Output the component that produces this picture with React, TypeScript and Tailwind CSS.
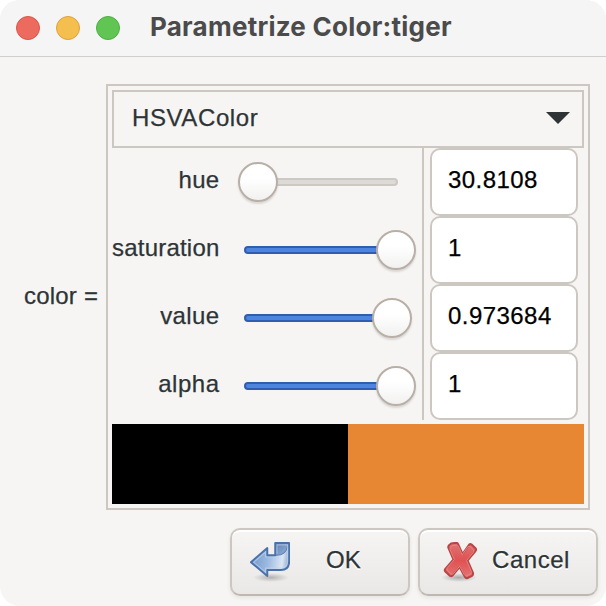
const label = "text-[24px] leading-7 text-[#2e3436] whitespace-nowrap [-webkit-text-stroke:0.25px_#2e3436]";

type Param = { name: string; value: string; knob: number; filled: boolean; track: string; spacing: string };

const params: Param[] = [
  { name: "hue", value: "30.8108", knob: 0, filled: false, track: "w-[154px]", spacing: "tracking-[0.3px]" },
  { name: "saturation", value: "1", knob: 138, filled: true, track: "w-[160px]", spacing: "tracking-[0.2px]" },
  { name: "value", value: "0.973684", knob: 134, filled: true, track: "w-[154px]", spacing: "tracking-[0.4px]" },
  { name: "alpha", value: "1", knob: 138, filled: true, track: "w-[160px]", spacing: "tracking-[0.5px]" },
];

function Slider({ param }: { param: Param }) {
  return (
    <div className="relative ml-[19px] flex h-[68px] w-[184px] shrink-0 items-center">
      <div
        className={
          "ml-1.5 h-2 rounded-full border-2 " +
          param.track +
          (param.filled ? " border-[#2f5db0] bg-[#4d85de]" : " border-[#cec8c3] bg-[#dcdbd7]")
        }
      />
      <div
        className="absolute top-[14px] size-10 rounded-full border-2 border-[#b8afa7] bg-linear-to-b from-white from-40% to-[#f2f1f0] shadow-[0_2px_2px_rgba(0,0,0,0.12)]"
        style={{ left: param.knob }}
      />
    </div>
  );
}

function OkIcon() {
  return (
    <svg className="size-10" viewBox="0 0 40 40">
      <defs>
        <linearGradient id="arrow" gradientUnits="userSpaceOnUse" x1="4" x2="39" y1="18" y2="22">
          <stop offset="0" stopColor="#7b9fd0" />
          <stop offset="0.4" stopColor="#9dbae0" />
          <stop offset="0.8" stopColor="#dbe6f3" />
          <stop offset="1" stopColor="#86a6cf" />
        </linearGradient>
        <linearGradient id="fold" x1="0" x2="1" y1="0" y2="1">
          <stop offset="0" stopColor="#5e83b6" />
          <stop offset="1" stopColor="#9ab4d8" />
        </linearGradient>
        <radialGradient id="okShade">
          <stop offset="0" stopColor="#000" stopOpacity="0.24" />
          <stop offset="1" stopColor="#000" stopOpacity="0" />
        </radialGradient>
      </defs>
      <ellipse cx="21" cy="35.5" rx="18" ry="4.5" fill="url(#okShade)" />
      <path d="M25.2 1H39.3V14H25.2Z" fill="url(#fold)" />
      <path d="M39.3 3V19Q39.3 28 31 28H17.3V34L.9 20.2 17.3 6V13.2H27Q35.5 13.2 37 7Z" fill="url(#arrow)" />
      <path d="M25.2 13.2H27Q35.5 13.2 37.4 5" fill="none" stroke="#5a80b3" strokeWidth="1" />
      <path d="M26.9 12V2.8H37.6V19Q37.5 26.2 30.5 26.2H15.6V30.5L3.6 20.2 15.6 9.7V15H26" fill="none" stroke="#c4d6ee" strokeWidth="1.2" opacity=".6" />
      <path d="M39.2 1V19Q39.2 28 31 28H17.3V34L.9 20.2 17.3 6V13.2H25.2V1Z" fill="none" stroke="#4a72aa" strokeWidth="1.9" strokeLinejoin="round" />
    </svg>
  );
}

function CancelIcon() {
  const cross = "M7 1.5 12 .8Q13.5.8 14 2L18.5 12 25 2.8Q26.2 1.6 27.6 2.5L31.5 6.3Q32.6 7.5 31.5 9L23.5 18.5 29 31Q29.5 33 28 33.8L23.5 36Q21.8 36.5 21 35L15.5 25 8.5 33.5Q7.2 34.8 5.8 33.7L1.3 29.5Q.2 28.2 1.3 26.8L9.5 17.5 4.3 5.5Q3.7 3.6 7 1.5Z";
  return (
    <svg className="h-10 w-[38px]" viewBox="-3 0 38 40">
      <defs>
        <radialGradient id="cancelShade">
          <stop offset="0" stopColor="#000" stopOpacity="0.28" />
          <stop offset="1" stopColor="#000" stopOpacity="0" />
        </radialGradient>
        <linearGradient id="cross" x1="0" x2="0" y1="0" y2="1">
          <stop offset="0" stopColor="#df7474" />
          <stop offset="0.5" stopColor="#e05252" />
          <stop offset="1" stopColor="#e57474" />
        </linearGradient>
      </defs>
      <ellipse cx="15" cy="35.5" rx="18" ry="4.5" fill="url(#cancelShade)" />
      <path d={cross} fill="url(#cross)" stroke="#b84546" strokeWidth="2" strokeLinejoin="round" />
      <path d={cross} transform="translate(2.1 2.4) scale(.87)" fill="none" stroke="#ea8583" strokeWidth="1.1" />
    </svg>
  );
}

const button =
  "flex h-[68px] w-[180px] items-start rounded-[10px] border-2 border-[#cdc7c2] border-b-[#bfb8b1] bg-linear-to-b from-[#f6f5f4] to-[#e9e8e6] pt-3 [text-shadow:0_2px_#fff] shadow-[inset_0_2px_#fff,0_2px_4px_rgba(0,0,0,0.07)]";

export default function App() {
  return (
    <div className="h-[606px] w-[606px] bg-white font-['Liberation_Sans',Arial,sans-serif]">
      <div className="flex h-full flex-col overflow-hidden rounded-[20px] bg-[#f6f5f3]">
        <header className="flex h-[57px] shrink-0 items-start border-b border-[#cfcfcf] bg-[#f5f5f5] pl-4">
          <div className="mt-4 flex gap-4">
            <span className="size-6 rounded-full border border-[#d9554b] bg-[#ec6a5e]" />
            <span className="size-6 rounded-full border border-[#dba23d] bg-[#f5bf4f]" />
            <span className="size-6 rounded-full border border-[#4fae40] bg-[#61c554]" />
          </div>
          <h1 className="mt-[11px] ml-[30px] whitespace-nowrap font-['Inter',sans-serif] text-[26px] leading-8 font-bold tracking-[0.25px] text-[#4b4b4b]">
            Parametrize Color:tiger
          </h1>
        </header>
        <main className="flex h-[453px] shrink-0 items-start pt-[27px]">
          <div className={label + " mt-[198px] w-[106px] pl-6 tracking-[0.2px]"}>color =</div>
          <section className="h-[426px] w-[484px] border-2 border-[#cdc7c2] p-1">
            <div className="flex h-[58px] items-start justify-between border-2 border-[#cdc7c2] pt-3 pr-3 pl-[18px]">
              <span className={label + " tracking-[0.6px]"}>HSVAColor</span>
              <svg className="mt-2 h-3 w-6" viewBox="0 0 24 12">
                <path d="M0 0H24L12 12Z" fill="#2e3436" />
              </svg>
            </div>
            <div className="flex h-[272px]">
              <div className="w-[312px] border-r-2 border-[#cdc7c2]">
                {params.map((p) => (
                  <div key={p.name} className="flex h-[68px] items-start">
                    <div className={label + " mt-[18px] flex w-[107px] shrink-0 justify-end " + p.spacing}>
                      <span className="-mr-[0.5px]">{p.name}</span>
                    </div>
                    <Slider param={p} />
                  </div>
                ))}
              </div>
              <div className="ml-1.5 w-[148px]">
                {params.map((p) => (
                  <div key={p.name} className="h-[68px] rounded-[10px] border-2 border-[#cdc7c2] bg-white pt-4 pl-4 text-[24px] leading-7 tracking-[0.45px] text-black [-webkit-text-stroke:0.25px_#000]">
                    {p.value}
                  </div>
                ))}
              </div>
            </div>
            <div className="mt-1 flex h-20">
              <div className="w-1/2 bg-black" />
              <div className="w-1/2 bg-[#e88733]" />
            </div>
          </section>
        </main>
        <footer className="flex shrink-0 justify-end gap-2 pt-[18px] pr-2">
          <div className={button + " pl-[18px]"}>
            <OkIcon />
            <span className={label + " mt-1 ml-9"}>OK</span>
          </div>
          <div className={button + " pl-[21px]"}>
            <CancelIcon />
            <span className={label + " mt-1 ml-[13px] tracking-[0.55px]"}>Cancel</span>
          </div>
        </footer>
      </div>
    </div>
  );
}
